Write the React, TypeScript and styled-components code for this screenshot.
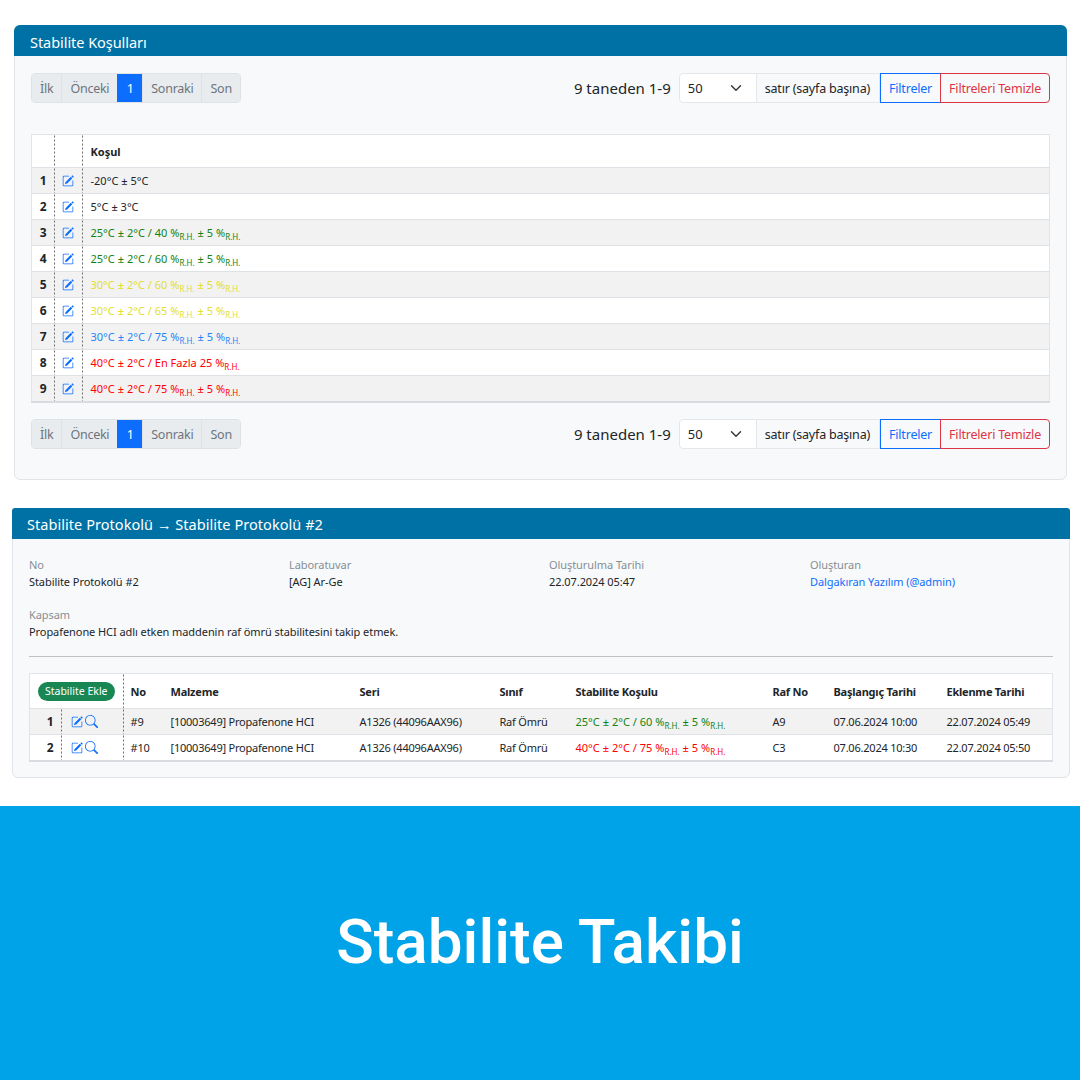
import React from 'react';
import styled, { createGlobalStyle, css } from 'styled-components';
import { BsPencilSquare, BsSearch } from 'react-icons/bs';

const RED = '#ff0000';
const GREEN = '#118311';
const YELLOW = '#e2de2e';
const BLUE = '#1f86f5';
const BLACK = '#212529';

type Condition = {
    text: string,
    tail: string,
    color: string,
}

const conditions: Condition[] = [
    { text: '-20°C ± 5°C', tail: '', color: BLACK },
    { text: '5°C ± 3°C', tail: '', color: BLACK },
    { text: '25°C ± 2°C / 40 %', tail: 'rh', color: GREEN },
    { text: '25°C ± 2°C / 60 %', tail: 'rh', color: GREEN },
    { text: '30°C ± 2°C / 60 %', tail: 'rh', color: YELLOW },
    { text: '30°C ± 2°C / 65 %', tail: 'rh', color: YELLOW },
    { text: '30°C ± 2°C / 75 %', tail: 'rh', color: BLUE },
    { text: '40°C ± 2°C / En Fazla 25 %', tail: 'max', color: RED },
    { text: '40°C ± 2°C / 75 %', tail: 'rh', color: RED },
];

const protocols = [
    { no: '#9', cond: '25°C ± 2°C / 60 %', color: GREEN, shelf: 'A9', start: '07.06.2024 10:00', added: '22.07.2024 05:49' },
    { no: '#10', cond: '40°C ± 2°C / 75 %', color: RED, shelf: 'C3', start: '07.06.2024 10:30', added: '22.07.2024 05:50' },
];

const GlobalStyle = createGlobalStyle`
    html, body {
        margin: 0;
        padding: 0;
        background: #fff;
    }
    body {
        font-family: "Noto Sans", "Open Sans", sans-serif;
        color: ${BLACK};
    }
`;

function RhText({ text, tail }: { text: string, tail: string }) {
    return (
        <>
            {text}
            {tail && <Sub>R.H.</Sub>}
            {tail === 'rh' && <> ± 5 %<Sub>R.H.</Sub></>}
        </>
    );
}

function Pager() {
    return (
        <PagerRow>
            <Pagination>
                <PageItem>İlk</PageItem>
                <PageItem>Önceki</PageItem>
                <PageItem $active>1</PageItem>
                <PageItem>Sonraki</PageItem>
                <PageItem>Son</PageItem>
            </Pagination>
            <PagerRight>
                <Count>9 taneden 1-9</Count>
                <Group>
                    <SelectBox>
                        50
                        <svg width="12" height="12" viewBox="0 0 16 16" fill="none" stroke="#343a40" strokeWidth="2" strokeLinecap="round" strokeLinejoin="round">
                            <path d="m2 5 6 6 6-6" />
                        </svg>
                    </SelectBox>
                    <GroupText>satır (sayfa başına)</GroupText>
                    <OutlineButton $color="#0d6efd">Filtreler</OutlineButton>
                    <OutlineButton $color="#dc3545" $last>Filtreleri Temizle</OutlineButton>
                </Group>
            </PagerRight>
        </PagerRow>
    );
}

function App() {
    return (
        <>
            <GlobalStyle />
            <FirstCard>
                <CardHeader>Stabilite Koşulları</CardHeader>
                <CardBody>
                    <Pager />
                    <ConditionTable>
                        <colgroup>
                            <Col $w={23} />
                            <Col $w={28} />
                            <col />
                        </colgroup>
                        <thead>
                            <tr>
                                <HeadCell $sep />
                                <HeadCell $sep />
                                <HeadCell>Koşul</HeadCell>
                            </tr>
                        </thead>
                        <tbody>
                            {conditions.map((c, i) => (
                                <BodyRow key={i} $odd={i % 2 === 0}>
                                    <NumCell>{i + 1}</NumCell>
                                    <IconCell><EditIcon /></IconCell>
                                    <ConditionCell $color={c.color}>
                                        <RhText text={c.text} tail={c.tail} />
                                    </ConditionCell>
                                </BodyRow>
                            ))}
                        </tbody>
                    </ConditionTable>
                    <Pager />
                </CardBody>
            </FirstCard>

            <SecondCard>
                <SecondHeader>Stabilite Protokolü → Stabilite Protokolü #2</SecondHeader>
                <CardBody>
                    <MetaGrid>
                        <div>
                            <MetaLabel>No</MetaLabel>
                            <MetaValue>Stabilite Protokolü #2</MetaValue>
                        </div>
                        <div>
                            <MetaLabel>Laboratuvar</MetaLabel>
                            <MetaValue>[AG] Ar-Ge</MetaValue>
                        </div>
                        <div>
                            <MetaLabel>Oluşturulma Tarihi</MetaLabel>
                            <MetaValue>22.07.2024 05:47</MetaValue>
                        </div>
                        <div>
                            <MetaLabel>Oluşturan</MetaLabel>
                            <MetaLink>Dalgakıran Yazılım (@admin)</MetaLink>
                        </div>
                    </MetaGrid>
                    <MetaLabel>Kapsam</MetaLabel>
                    <MetaValue>Propafenone HCI adlı etken maddenin raf ömrü stabilitesini takip etmek.</MetaValue>
                    <Divider />
                    <ProtocolTable>
                        <colgroup>
                            <Col $w={32} />
                            <Col $w={62} />
                            <Col $w={40} />
                            <Col $w={189} />
                            <Col $w={140} />
                            <Col $w={76} />
                            <Col $w={197} />
                            <Col $w={61} />
                            <Col $w={113} />
                            <col />
                        </colgroup>
                        <thead>
                            <tr>
                                <ButtonCell colSpan={2} $sep><AddButton>Stabilite Ekle</AddButton></ButtonCell>
                                <TallHead>No</TallHead>
                                <TallHead>Malzeme</TallHead>
                                <TallHead>Seri</TallHead>
                                <TallHead>Sınıf</TallHead>
                                <TallHead>Stabilite Koşulu</TallHead>
                                <TallHead>Raf No</TallHead>
                                <TallHead>Başlangıç Tarihi</TallHead>
                                <TallHead>Eklenme Tarihi</TallHead>
                            </tr>
                        </thead>
                        <tbody>
                            {protocols.map((p, i) => (
                                <BodyRow key={p.no} $odd={i % 2 === 0}>
                                    <NumCell>{i + 1}</NumCell>
                                    <ActionCell>
                                        <EditIcon />
                                        <SearchIcon />
                                    </ActionCell>
                                    <Cell>{p.no}</Cell>
                                    <Cell>[10003649] Propafenone HCI</Cell>
                                    <Cell>A1326 (44096AAX96)</Cell>
                                    <Cell>Raf Ömrü</Cell>
                                    <ConditionCell $color={p.color}>
                                        <RhText text={p.cond} tail="rh" />
                                    </ConditionCell>
                                    <Cell>{p.shelf}</Cell>
                                    <Cell>{p.start}</Cell>
                                    <Cell>{p.added}</Cell>
                                </BodyRow>
                            ))}
                        </tbody>
                    </ProtocolTable>
                </CardBody>
            </SecondCard>

            <Banner>Stabilite Takibi</Banner>
        </>
    );
}

const dottedRight = css`
    background-image: linear-gradient(#6f6f6f 50%, transparent 50%);
    background-size: 1px 4px;
    background-position: right top;
    background-repeat: repeat-y;
`;

const Card = styled.section`
    background: #f8f9fa;
    border: 1px solid #e1e4e8;
    border-radius: 6px;
    box-sizing: border-box;
`;

const FirstCard = styled(Card)`
    margin: 25px 13px 28px 14px;
    height: 455px;
`;

const SecondCard = styled(Card)`
    margin: 0 10px 28px 12px;
    height: 270px;
`;

const CardHeader = styled.header`
    height: 31px;
    margin: -1px -1px 0;
    padding: 0 16px;
    background: #0071a4;
    border-radius: 6px 6px 0 0;
    color: #fff;
    font-size: 14.5px;
    letter-spacing: -0.05px;
    line-height: 34px;
`;

const SecondHeader = styled(CardHeader)`
    padding-left: 15px;
    border-radius: 3px 3px 0 0;
    letter-spacing: 0.05px;
    line-height: 33px;
`;

const CardBody = styled.div`
    padding: 17px 16px 0 16px;
`;

const PagerRow = styled.div`
    display: flex;
    justify-content: space-between;
    align-items: center;
    height: 30px;
`;

const Pagination = styled.div`
    display: flex;
    height: 30px;
    border-radius: 4px;
    overflow: hidden;
    border: 1px solid #dee2e6;
    box-sizing: border-box;
`;

const PageItem = styled.span<{ $active?: boolean }>`
    display: flex;
    align-items: center;
    padding: 0 ${p => (p.$active ? '8.5px' : '8px')};
    font-size: 12.5px;
    letter-spacing: -0.25px;
    background: ${p => (p.$active ? '#0d6efd' : '#e9ecef')};
    color: ${p => (p.$active ? '#fff' : '#6c757d')};
    border-left: 1px solid ${p => (p.$active ? '#0d6efd' : '#dee2e6')};
    &:first-child {
        border-left: 0;
    }
`;

const PagerRight = styled.div`
    display: flex;
    align-items: center;
    gap: 8px;
`;

const Count = styled.span`
    font-size: 15px;
`;

const Group = styled.div`
    display: flex;
    height: 30px;
    font-size: 12.5px;
    letter-spacing: -0.2px;
`;

const SelectBox = styled.div`
    width: 78px;
    box-sizing: border-box;
    display: flex;
    align-items: center;
    justify-content: space-between;
    padding: 0 14px 0 8px;
    background: #fff;
    border: 1px solid #e4e7ea;
    border-radius: 4px 0 0 4px;
    font-size: 13px;
    letter-spacing: 0;
`;

const GroupText = styled.div`
    display: flex;
    align-items: center;
    padding: 0 9px 0 8px;
    background: #f8f9fa;
    border: 1px solid #e4e7ea;
    border-left: 0;
`;

const OutlineButton = styled.button<{ $color: string, $last?: boolean }>`
    font: inherit;
    letter-spacing: inherit;
    height: 30px;
    padding: 0 8px;
    margin-left: ${p => (p.$last ? '-1px' : '0')};
    background: transparent;
    color: ${p => p.$color};
    border: 1px solid ${p => p.$color};
    border-radius: ${p => (p.$last ? '0 4px 4px 0' : '0')};
`;

const ConditionTable = styled.table`
    width: 100%;
    table-layout: fixed;
    border-collapse: collapse;
    margin: 31px 0 16px;
    background: #fff;
    border: 1px solid #e1e4e8;
    border-bottom: 2px solid #d8dbdf;
    font-size: 11px;
`;

const ProtocolTable = styled(ConditionTable)`
    margin: 0;
    letter-spacing: -0.22px;
    td:nth-child(n + 3), th:nth-child(n + 2) {
        padding-left: 7px;
    }
`;

const Col = styled.col<{ $w: number }>`
    width: ${p => p.$w}px;
`;

const HeadCell = styled.th<{ $sep?: boolean }>`
    height: 32px;
    padding: 0 8px;
    text-align: left;
    font-weight: 700;
    border-bottom: 1px solid #dee2e6;
    ${p => p.$sep && dottedRight}
`;

const TallHead = styled(HeadCell)`
    height: 34px;
`;

const ButtonCell = styled(HeadCell)`
    padding: 0 1px 0 0;
    text-align: center;
`;

const AddButton = styled.span`
    display: inline-block;
    padding: 0 7px;
    line-height: 19px;
    background: #198754;
    color: #fff;
    border-radius: 10px;
    font-size: 10.5px;
    font-weight: 400;
    letter-spacing: 0;
`;

const BodyRow = styled.tr<{ $odd: boolean }>`
    background: ${p => (p.$odd ? '#f2f2f2' : '#fff')};
`;

const Cell = styled.td`
    height: 25px;
    padding: 0 8px;
    border-bottom: 1px solid #dee2e6;
    white-space: nowrap;
`;

const ConditionCell = styled(Cell)<{ $color: string }>`
    color: ${p => p.$color};
    letter-spacing: 0.02px;
`;

const NumCell = styled(Cell)`
    padding: 0 8px 0 0;
    text-align: right;
    font-size: 12px;
    font-weight: 700;
    ${dottedRight}
`;

const IconCell = styled(Cell)`
    padding: 0 2px 0 0;
    text-align: center;
    line-height: 0;
    ${dottedRight}
`;

const ActionCell = styled(IconCell)`
    padding: 0 0 0 9px;
    text-align: left;
`;

const EditIcon = styled(BsPencilSquare)`
    width: 12px;
    height: 12px;
    color: #0d6efd;
`;

const SearchIcon = styled(BsSearch)`
    width: 13px;
    height: 13px;
    margin-left: 2px;
    color: #0d6efd;
`;

const Sub = styled.sub`
    font-size: 8px;
    line-height: 0;
    vertical-align: -3px;
`;

const MetaGrid = styled.div`
    display: grid;
    grid-template-columns: 260px 260px 261px 1fr;
    margin-bottom: 16px;
`;

const MetaLabel = styled.div`
    font-size: 11px;
    line-height: 17px;
    color: #868e96;
    letter-spacing: -0.07px;
`;

const MetaValue = styled.div`
    font-size: 11px;
    line-height: 17px;
    letter-spacing: -0.07px;
`;

const MetaLink = styled(MetaValue)`
    color: #0d6efd;
`;

const Divider = styled.hr`
    margin: 16px 0;
    border: 0;
    border-top: 1px solid #bfc2c5;
`;

const Banner = styled.div`
    height: 274px;
    display: flex;
    align-items: center;
    justify-content: center;
    padding-bottom: 4px;
    box-sizing: border-box;
    background: #00a3e8;
    color: #fff;
    font-family: Roboto, sans-serif;
    font-size: 62px;
    font-weight: 500;
`;

export default App;
